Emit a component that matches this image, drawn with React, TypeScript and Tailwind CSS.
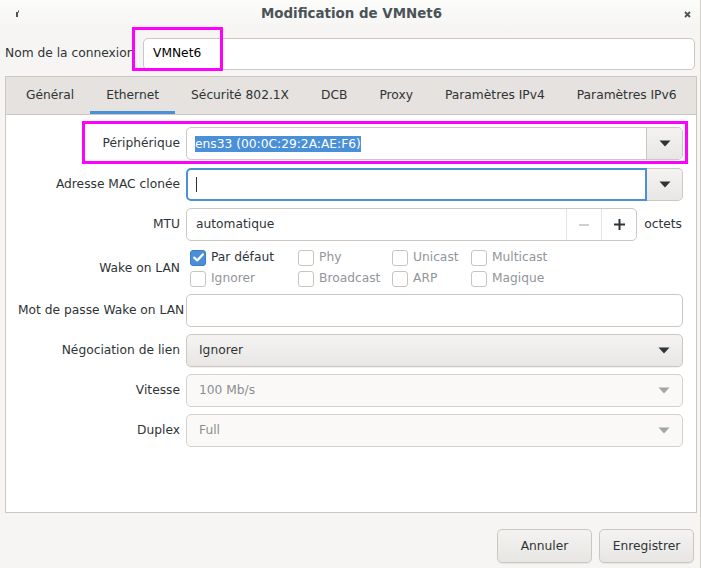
import { ReactNode } from 'react'

const TABS = ['Général', 'Ethernet', 'Sécurité 802.1X', 'DCB', 'Proxy', 'Paramètres IPv4', 'Paramètres IPv6']

function Arrow({ disabled }: { disabled?: boolean }) {
  return (
    <svg width="12" height="7" viewBox="0 0 12 7">
      <path d="M0.5 0.5 H11.5 L6 6.5 Z" fill={disabled ? '#a3a6a7' : '#2e3436'} />
    </svg>
  )
}

function Row({ label, children, className = '' }: { label: string; children: ReactNode; className?: string }) {
  return (
    <div className={`flex items-center ${className}`}>
      <div className="w-[168px] shrink-0 text-right pr-[6px] text-[#2e3436] whitespace-nowrap">{label}</div>
      <div className="flex-1 flex items-center min-w-0">{children}</div>
    </div>
  )
}

function Check({ label, checked }: { label: string; checked?: boolean }) {
  return (
    <div className="flex items-center gap-[5px] h-[16px] whitespace-nowrap">
      {checked ? (
        <div className="w-[16px] h-[16px] rounded-[3px] bg-[#4a90d9] border border-[#3a7dc4] flex items-center justify-center">
          <svg width="11" height="9" viewBox="0 0 11 9">
            <path d="M1.2 4.6 L4.2 7.4 L9.8 1.4" stroke="white" strokeWidth="2.2" fill="none" strokeLinecap="round" strokeLinejoin="round" />
          </svg>
        </div>
      ) : (
        <div className="w-[16px] h-[16px] rounded-[3px] bg-white border border-[#c8c5c1]" />
      )}
      <span className={checked ? 'text-[#2e3436]' : 'text-[#92959a]'}>{label}</span>
    </div>
  )
}

export default function App() {
  return (
    <div
      className="w-[701px] h-[568px] bg-[#f6f5f4] text-[12.25px] text-[#2e3436] flex flex-col relative overflow-hidden border-r border-[#d3cfcb]"
      style={{ fontFamily: '"DejaVu Sans", Verdana, sans-serif' }}
    >
      {/* Title bar */}
      <div className="h-[28px] shrink-0 flex items-center justify-between pl-[15px] pr-[13px] bg-gradient-to-b from-[#fcfcfb] to-[#f6f5f4]">
        <svg width="6" height="8" viewBox="0 0 6 8">
          <rect x="1" y="2" width="2" height="5" fill="#4a5359" />
          <rect x="3" y="0.5" width="1" height="2" fill="#4a5359" />
        </svg>
        <span className="font-bold text-[#4a5357] text-[13.4px] mr-[2px]">Modification de VMNet6</span>
        <svg width="7" height="7" viewBox="0 0 7 7" className="mr-[-4px]">
          <path d="M1 1 L6 6 M6 1 L1 6" stroke="#4a5359" strokeWidth="1.8" />
        </svg>
      </div>

      {/* Connection name */}
      <div className="flex items-center pl-[5px] pr-[5px] pt-[9px] h-[42px] relative">
        <span className="w-[133px] shrink-0 text-[#2e3436] whitespace-nowrap">Nom de la connexion</span>
        <div className="flex-1 ml-[5px] h-[32px] bg-white border border-[#cdc7c2] rounded-[5px] flex items-center px-[9px] text-black">
          VMNet6
        </div>
        <div className="absolute left-[132px] top-[-1px] w-[91px] h-[44px] border-[3px] border-[#ff00ff] pointer-events-none" />
      </div>

      {/* Notebook */}
      <div className="ml-[5px] mr-[3px] mt-[6px] h-[437px] border border-[#cdc7c2] bg-white flex flex-col">
        <div className="h-[38px] shrink-0 bg-[#e5e2df] border-b border-[#cdc7c2] flex items-stretch pl-[4px]">
          {TABS.map((t, i) => (
            <div
              key={t}
              className={`flex items-center px-[16px] whitespace-nowrap ${i === 1 ? 'border-b-[3px] border-[#4a90d9] pt-[3px]' : ''}`}
            >
              <span className="text-[#2e3436]">{t}</span>
            </div>
          ))}
        </div>

        <div className="flex flex-col pt-[12px] pl-[12px] pr-[13px] relative">
          {/* Périphérique */}
          <Row label="Périphérique" className="h-[33px]">
            <div className="flex-1 h-[33px] flex bg-white border border-[#cdc7c2] rounded-[5px] overflow-hidden">
              <div className="flex-1 flex items-center pl-[8px]">
                <span className="bg-[#4a90d9] text-white leading-[16px]">ens33 (00:0C:29:2A:AE:F6)</span>
              </div>
              <div className="w-[36px] border-l border-[#cdc7c2] bg-gradient-to-b from-[#f4f3f2] to-[#e9e7e5] flex items-center justify-center">
                <Arrow />
              </div>
            </div>
          </Row>
          <div className="absolute left-[76px] top-[6px] w-[606px] h-[43px] border-[3px] border-[#ff00ff] pointer-events-none" />

          {/* Adresse MAC */}
          <Row label="Adresse MAC clonée" className="h-[33px] mt-[8px]">
            <div className="flex-1 h-[33px] flex">
              <div className="flex-1 flex items-center pl-[8px] bg-white border-2 border-[#4a90d9] rounded-l-[5px]">
                <div className="w-[1px] h-[15px] bg-[#2e3436]" />
              </div>
              <div className="w-[36px] border border-l-0 border-[#cdc7c2] rounded-r-[5px] bg-gradient-to-b from-[#f4f3f2] to-[#e9e7e5] flex items-center justify-center">
                <Arrow />
              </div>
            </div>
          </Row>

          {/* MTU */}
          <Row label="MTU" className="h-[33px] mt-[7px]">
            <div className="flex-1 h-[33px] flex bg-white border border-[#cdc7c2] rounded-[5px] overflow-hidden">
              <div className="flex-1 flex items-center pl-[9px]">automatique</div>
              <div className="w-[35px] border-l border-[#e6e3e0] flex items-center justify-center">
                <div className="w-[10px] h-[2px] bg-[#d0d0d0]" />
              </div>
              <div className="w-[35px] border-l border-[#e6e3e0] flex items-center justify-center">
                <svg width="11" height="11" viewBox="0 0 11 11">
                  <path d="M5.5 0 V11 M0 5.5 H11" stroke="#2e3436" strokeWidth="2" />
                </svg>
              </div>
            </div>
            <span className="ml-[7px] mr-[1px]">octets</span>
          </Row>

          {/* Wake on LAN */}
          <Row label="Wake on LAN" className="h-[38px] mt-[8px]">
            <div className="grid grid-cols-[108px_94px_79px_100px] gap-y-[5px] pl-[4px]">
              <Check label="Par défaut" checked />
              <Check label="Phy" />
              <Check label="Unicast" />
              <Check label="Multicast" />
              <Check label="Ignorer" />
              <Check label="Broadcast" />
              <Check label="ARP" />
              <Check label="Magique" />
            </div>
          </Row>

          {/* Password */}
          <Row label="Mot de passe Wake on LAN" className="h-[33px] mt-[7px]">
            <div className="flex-1 h-[33px] bg-white border border-[#cdc7c2] rounded-[5px]" />
          </Row>

          {/* Négociation */}
          <Row label="Négociation de lien" className="h-[33px] mt-[7px]">
            <div className="flex-1 h-[33px] flex items-center justify-between px-[12px] border border-[#cdc7c2] rounded-[5px] bg-gradient-to-b from-[#f4f3f2] to-[#e9e7e5] shadow-[0_1px_0_rgba(0,0,0,0.05)]">
              <span>Ignorer</span>
              <Arrow />
            </div>
          </Row>

          {/* Vitesse */}
          <Row label="Vitesse" className="h-[33px] mt-[7px]">
            <div className="flex-1 h-[33px] flex items-center justify-between px-[12px] border border-[#d5d0cc] rounded-[5px] bg-[#faf9f8] text-[#8b8e8f]">
              <span>100 Mb/s</span>
              <Arrow disabled />
            </div>
          </Row>

          {/* Duplex */}
          <Row label="Duplex" className="h-[33px] mt-[7px]">
            <div className="flex-1 h-[33px] flex items-center justify-between px-[12px] border border-[#d5d0cc] rounded-[5px] bg-[#faf9f8] text-[#8b8e8f]">
              <span>Full</span>
              <Arrow disabled />
            </div>
          </Row>
        </div>
      </div>

      {/* Footer buttons */}
      <div className="flex justify-end gap-[7px] pr-[6px] mt-[16px]">
        <button className="w-[95px] h-[34px] border border-[#cdc7c2] rounded-[5px] bg-gradient-to-b from-[#f4f3f2] to-[#e8e6e3] text-[#2e3436] shadow-[0_1px_0_rgba(0,0,0,0.06)]">
          Annuler
        </button>
        <button className="w-[95px] h-[34px] border border-[#cdc7c2] rounded-[5px] bg-gradient-to-b from-[#f4f3f2] to-[#e8e6e3] text-[#2e3436] shadow-[0_1px_0_rgba(0,0,0,0.06)]">
          Enregistrer
        </button>
      </div>
    </div>
  )
}
